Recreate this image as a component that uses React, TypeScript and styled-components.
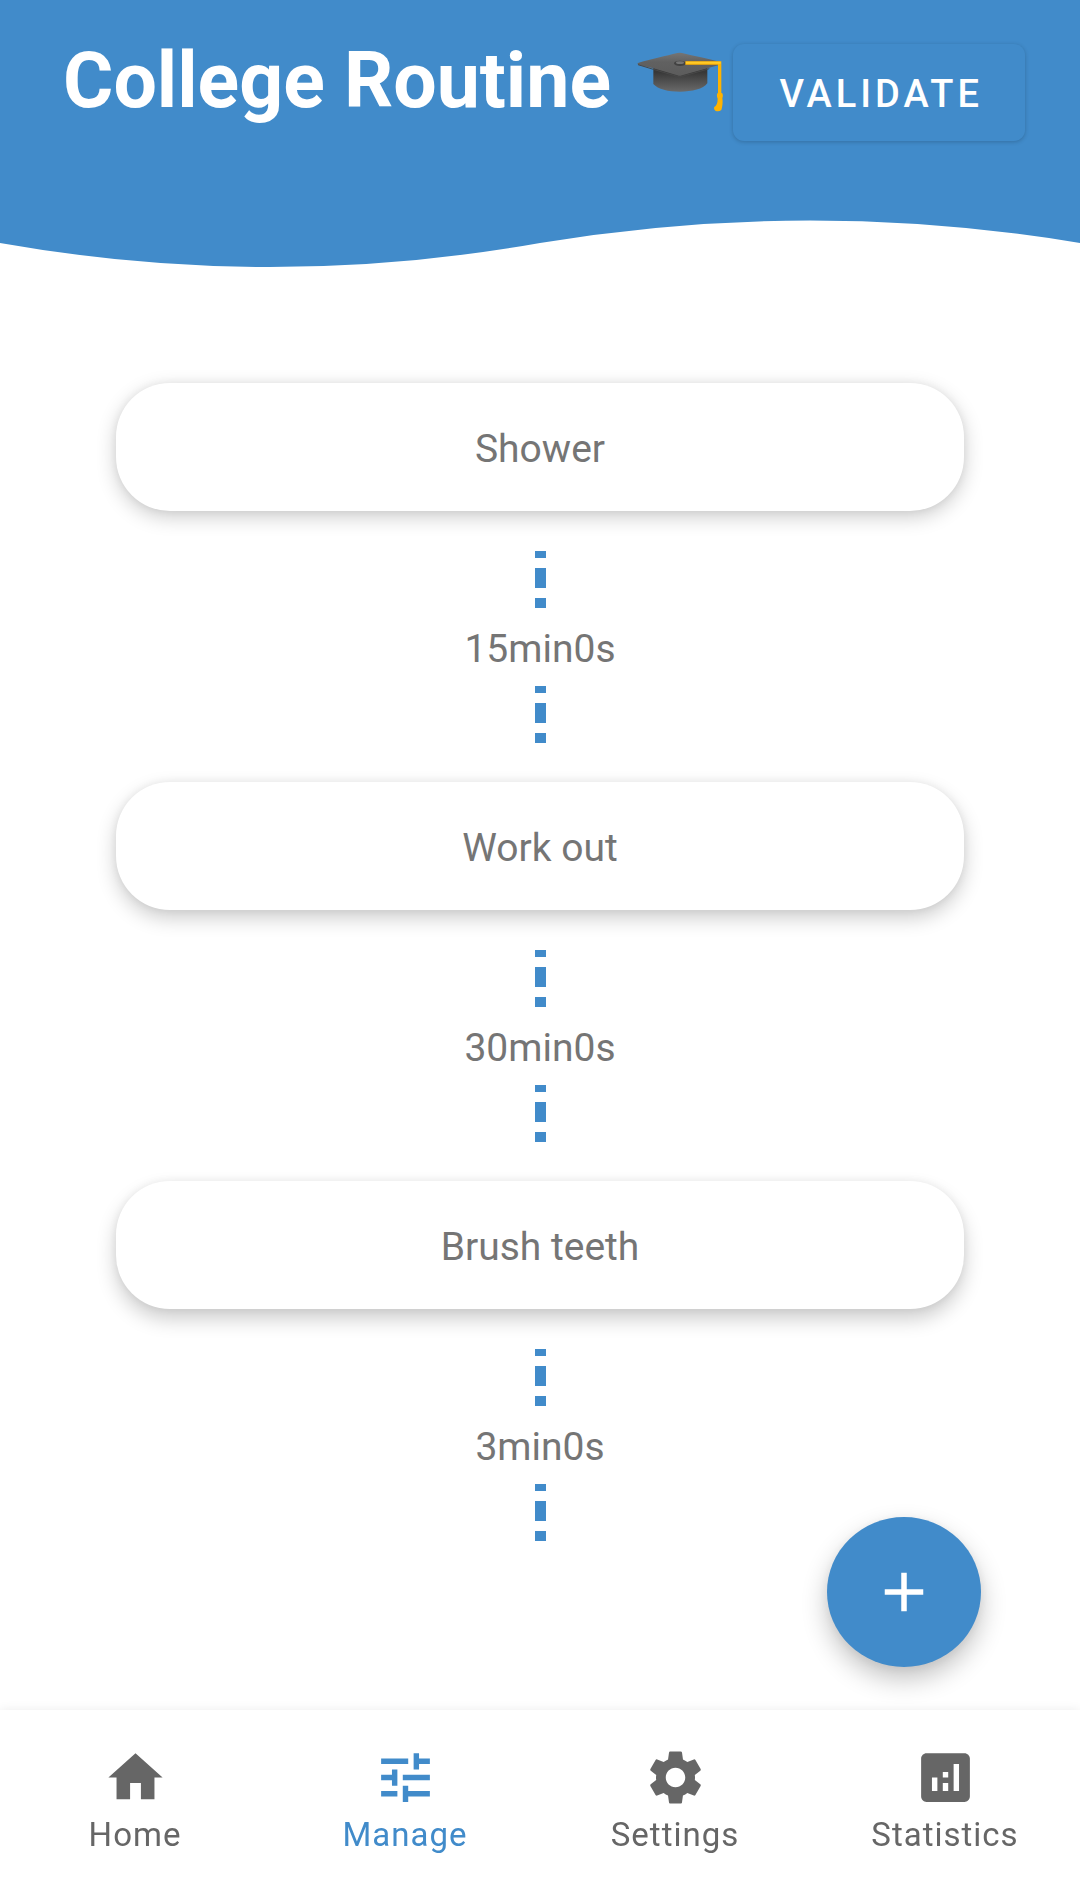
import React from "react";
import styled, { createGlobalStyle } from "styled-components";
import { MdAdd, MdAnalytics, MdHome, MdSettings, MdTune } from "react-icons/md";

const BLUE = "#418bca";

const GlobalStyle = createGlobalStyle`
  * { box-sizing: border-box; }
  body {
    margin: 0;
    background: #fff;
    font-family: Roboto, "Liberation Sans", sans-serif;
    color: #757575;
  }
`;

const Screen = styled.div`
  display: flex;
  flex-direction: column;
  min-height: 100vh;
`;

const TopBar = styled.div`
  display: flex;
  align-items: flex-start;
  justify-content: space-between;
  height: 220px;
  padding: 35px 55px 0 63px;
  background: ${BLUE};
`;

const Title = styled.h1`
  display: flex;
  align-items: center;
  gap: 26px;
  margin: 0;
  font-size: 77px;
  font-weight: 700;
  line-height: 92px;
  white-space: nowrap;
  color: #fff;
`;

const Cap = styled.svg`
  width: 86px;
  height: 62px;
`;

const ValidateButton = styled.button`
  height: 97px;
  margin-top: 9px;
  padding: 2px 42px 0 46px;
  border: 0;
  border-radius: 11px;
  background: ${BLUE};
  box-shadow: 0 1px 4px rgba(0, 0, 0, 0.2);
  font: 500 38px/44px Roboto, "Liberation Sans", sans-serif;
  letter-spacing: 4px;
  text-transform: uppercase;
  color: #fff;
  cursor: pointer;
`;

const Wave = styled.svg`
  display: block;
  width: 100%;
  height: 48px;
`;

const Main = styled.main`
  flex: 1;
  padding: 115px 116px 0;
`;

const Steps = styled.ol`
  margin: 0;
  padding: 0;
  list-style: none;
`;

const Step = styled.li`
  display: flex;
  flex-direction: column;
  align-items: center;
  font-size: 39px;
  line-height: 44px;

  & + & {
    margin-top: 39px;
  }
`;

const Card = styled.div<{ $depth: number }>`
  display: flex;
  align-items: center;
  justify-content: center;
  width: 100%;
  height: 128px;
  margin-bottom: 40px;
  padding-top: 4px;
  border-radius: 54px;
  background: #fff;
  box-shadow:
    0 ${(p) => p.$depth}px 20px rgba(0, 0, 0, 0.2),
    0 0 8px rgba(0, 0, 0, 0.06);
`;

const Duration = styled.time`
  padding: 19px 0 15px;
`;

const DashColumn = styled.div`
  display: flex;
  flex-direction: column;
  gap: 10px;
`;

const Dash = styled.span<{ $length: number }>`
  width: 11px;
  height: ${(p) => p.$length}px;
  background: ${BLUE};
`;

const AddButton = styled.button`
  position: fixed;
  right: 99px;
  bottom: 221px;
  display: flex;
  align-items: center;
  justify-content: center;
  width: 154px;
  height: 150px;
  padding: 0;
  border: 0;
  border-radius: 50%;
  background: ${BLUE};
  box-shadow:
    0 12px 26px rgba(0, 0, 0, 0.24),
    0 2px 12px rgba(0, 0, 0, 0.06);
  font-size: 66px;
  color: #fff;
  cursor: pointer;
`;

const BottomNav = styled.nav`
  position: sticky;
  bottom: 0;
  display: grid;
  grid-template-columns: repeat(4, 1fr);
  height: 178px;
  background: #fff;
  box-shadow: 0 0 10px rgba(0, 0, 0, 0.08);
`;

const NavLink = styled.a<{ $active?: boolean }>`
  display: flex;
  flex-direction: column;
  align-items: center;
  gap: 6px;
  padding-top: 35px;
  font-size: 33px;
  line-height: 38px;
  letter-spacing: 1px;
  text-decoration: none;
  color: ${(p) => (p.$active ? BLUE : "#666")};

  svg {
    width: 65px;
    height: 65px;
  }
`;

const steps = [
  { name: "Shower", duration: "15min0s", depth: 6 },
  { name: "Work out", duration: "30min0s", depth: 8 },
  { name: "Brush teeth", duration: "3min0s", depth: 10 },
];

const tabs = [
  { label: "Home", href: "#home", Icon: MdHome },
  { label: "Manage", href: "#manage", Icon: MdTune, active: true },
  { label: "Settings", href: "#settings", Icon: MdSettings },
  { label: "Statistics", href: "#statistics", Icon: MdAnalytics },
];

function GraduationCap() {
  return (
    <Cap viewBox="45 30 258 186" role="img" aria-label="Graduation cap">
      <defs>
        <linearGradient id="board" x1="0" y1="0" x2="0" y2="1">
          <stop offset="0" stopColor="#757575" />
          <stop offset="0.4" stopColor="#616161" />
          <stop offset="1" stopColor="#5c5c5c" />
        </linearGradient>
        <linearGradient id="base" x1="0" y1="0" x2="0" y2="1">
          <stop offset="0.2" stopColor="#383838" />
          <stop offset="1" stopColor="#6a6a6a" />
        </linearGradient>
      </defs>
      <path d="M94 82V132C108 148 138 155 174 155C210 155 244 147 256 130V82Z" fill="url(#base)" />
      <path
        d="M50 68C90 56 132 48 166 39Q173 37 180 39C216 48 258 56 294 66Q300 70 294 74L180 106Q173 109 166 106L94 85L50 75Q43 71 50 68Z"
        fill="url(#board)"
      />
      <path d="M48 74L94 88L166 109Q173 111 180 109L262 86" fill="none" stroke="#484848" strokeWidth="3" />
      <ellipse cx="174" cy="70" rx="18" ry="8" fill="#424242" />
      <ellipse cx="174" cy="68" rx="12" ry="4" fill="#757575" />
      <path d="M190 69H293V165" fill="none" stroke="#ffb300" strokeWidth="10" />
      <path d="M192 68H296" stroke="#ffca28" strokeWidth="6" />
      <path
        d="M286 160Q293 156 301 160Q304 168 301 174C303 188 301 202 298 210Q290 216 280 212Q274 206 277 201Q287 194 287 176Q283 168 286 160Z"
        fill="#ffb300"
      />
    </Cap>
  );
}

function Connector() {
  return (
    <DashColumn aria-hidden="true">
      <Dash $length={7} />
      <Dash $length={20} />
      <Dash $length={10} />
    </DashColumn>
  );
}

export default function App() {
  return (
    <Screen>
      <GlobalStyle />
      <header>
        <TopBar>
          <Title>
            College Routine
            <GraduationCap />
          </Title>
          <ValidateButton type="button">Validate</ValidateButton>
        </TopBar>
        <Wave viewBox="0 0 1080 48" preserveAspectRatio="none" aria-hidden="true">
          <path d="M0 0V23Q270 71 540 23Q810 -22 1080 23V0Z" fill={BLUE} />
        </Wave>
      </header>
      <Main>
        <Steps>
          {steps.map((step) => (
            <Step key={step.name}>
              <Card $depth={step.depth}>{step.name}</Card>
              <Connector />
              <Duration>{step.duration}</Duration>
              <Connector />
            </Step>
          ))}
        </Steps>
      </Main>
      <AddButton type="button" aria-label="Add step">
        <MdAdd />
      </AddButton>
      <BottomNav>
        {tabs.map(({ label, href, Icon, active }) => (
          <NavLink key={label} href={href} $active={active} aria-current={active ? "page" : undefined}>
            <Icon />
            {label}
          </NavLink>
        ))}
      </BottomNav>
    </Screen>
  );
}
